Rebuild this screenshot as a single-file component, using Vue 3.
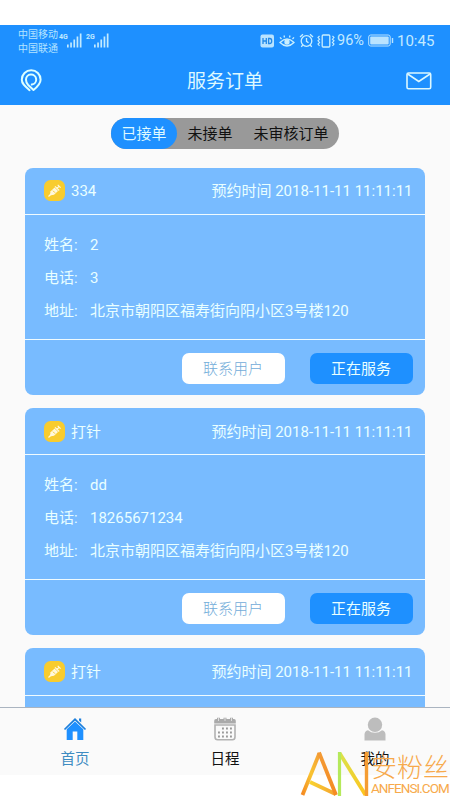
<script setup>
const tabs = ['已接单', '未接单', '未审核订单']
const address = '北京市朝阳区福寿街向阳小区3号楼120'
const orders = [
  { type: '334', rows: [['姓名:', '2'], ['电话:', '3'], ['地址:', address]] },
  { type: '打针', rows: [['姓名:', 'dd'], ['电话:', '18265671234'], ['地址:', address]] },
  { type: '打针', rows: null },
]
const time = '2018-11-11 11:11:11'
const bars = [3, 5, 8, 11, 14]
</script>

<template>
  <div class="screen">
    <header>
      <div class="status">
        <div class="carriers"><span>中国移动</span><span>中国联通</span></div>
        <div v-for="net in ['4G', '2G']" :key="net" class="signal" :class="'net-' + net">
          <b>{{ net }}</b>
          <svg width="16" height="15" viewBox="0 0 16 15">
            <rect v-for="(h, i) in bars" :key="h" :x="i * 3.2" :y="14.5 - h" width="1.7" :height="h" fill="#c3eaff" />
          </svg>
        </div>
        <div class="right">
          <svg class="hd" width="15" height="14" viewBox="0 0 15 14"><rect x=".5" y=".5" width="13.5" height="13" rx="2" fill="#b9e3ff" /><path d="M3 4v6M6.3 4v6M3 7h3.3M8.6 4.5v5h1.3q1.8 0 1.8-2.5T9.9 4.5z" fill="none" stroke="#2389e8" stroke-width="1.3" /></svg>
          <svg class="eye" width="16" height="14" viewBox="0 0 16 14" fill="none" stroke="#c9efff" stroke-width="1.3"><path d="M1 8.5Q8 1.5 15 8.5Q8 15.5 1 8.5zM2.5 5L1 3.4M5.5 3.5L5 1.5M10.5 3.5L11 1.5M13.5 5L15 3.4" /><circle cx="8" cy="8" r="2" fill="#c9efff" /></svg>
          <svg class="alarm" width="15" height="15" viewBox="0 0 15 15" fill="none" stroke="#c9efff" stroke-width="1.3"><circle cx="7.5" cy="8" r="5.3" /><path d="M7.5 5v3.3l2 1.5M1 4L4 1.2M14 4L11 1.2M3.7 12L2.3 13.8M11.3 12l1.4 1.8" /></svg>
          <svg class="vibe" width="18" height="14" viewBox="0 0 18 14" fill="none" stroke="#c9efff" stroke-width="1.3"><rect x="5.2" y="1" width="7.6" height="12" rx="1" /><path d="M2.5 2L1 3.6 2.6 5.2 1 6.8 2.6 8.4 1 10 2.5 11.8M15.5 2L17 3.6 15.4 5.2 17 6.8 15.4 8.4 17 10 15.5 11.8" stroke-width="1.1" /></svg>
          <span class="percent">96%</span>
          <svg class="battery" width="26" height="13" viewBox="0 0 26 13"><rect x=".7" y="1" width="21.5" height="11" rx="2" fill="none" stroke="#b9e3ff" /><rect x="2.2" y="2.5" width="18.5" height="8" rx="1" fill="#b9e3ff" /><path d="M24.5 4v5" stroke="#b9e3ff" stroke-width="1.4" /></svg>
          <span class="clock">10:45</span>
        </div>
      </div>
      <div class="titlebar">
        <svg class="pin" width="24" height="24" viewBox="0 0 24 24" fill="none" stroke="#dcffff" stroke-width="2" stroke-linejoin="round" stroke-linecap="round"><path d="M9.6 21.2C5 17.2 1.8 14.7 1.8 10.7A9.4 9.4 0 0 1 20.6 10.7C20.6 14.7 17.5 17.6 13.5 21L8.2 16C6.6 14.4 6 12.8 6 10.7A5.1 5.1 0 1 1 11.8 15.6" /></svg>
        <h1>服务订单</h1>
        <svg class="mail" width="26" height="18" viewBox="0 0 26 18" fill="none" stroke="#dcf8ff" stroke-width="1.6"><rect x="1" y="1" width="23.7" height="15.8" rx="1.5" /><path d="M1.7 2L12.8 9.5 24 2" /></svg>
      </div>
    </header>

    <main>
      <nav class="segments">
        <span v-for="(tab, i) in tabs" :key="tab" :class="{ active: i === 0 }">{{ tab }}</span>
      </nav>
      <article v-for="(order, i) in orders" :key="i" class="card" :class="{ peek: !order.rows }">
        <div class="card-head">
          <svg class="needle" width="21" height="21" viewBox="0 0 21 21"><rect width="21" height="21" rx="6.5" fill="#f8cc2e" /><path d="M4.5 16.5L7 14" stroke="#fff8dc" stroke-width="1.2" /><path d="M5.8 15.4L6.6 11.2 10.6 7.6 14 11 10 14.8z" fill="#fff8dc" /><path d="M12.5 8.9L15 6.3M11 6.3L15.2 10.5M13.7 4.8L16.6 7.7" stroke="#fff8dc" stroke-width="1.2" /><path d="M9 10.7l2 2" stroke="#f8cc2e" /></svg>
          <span>{{ order.type }}</span>
          <span class="time">预约时间 {{ time }}</span>
        </div>
        <template v-if="order.rows">
          <dl>
            <div v-for="[label, value] in order.rows" :key="label"><dt>{{ label }}</dt><dd>{{ value }}</dd></div>
          </dl>
          <div class="actions">
            <button class="contact">联系用户</button>
            <button class="serving">正在服务</button>
          </div>
        </template>
      </article>
    </main>

    <footer>
      <div class="item home">
        <svg width="24" height="24" viewBox="0 0 24 24"><path d="M1.5 12.5L12 2.3 22.5 12.5" fill="none" stroke="#1c7fdc" stroke-width="1.7" /><path d="M16 1.5h2.2v4L16 3.5z" fill="#1c7fdc" /><path d="M3.7 12.3L12 4.5l8.3 7.8V23h-6v-8.5H9.7V23h-6z" fill="#1e90ff" /></svg>
        <span>首页</span>
      </div>
      <div class="item">
        <svg width="24" height="24" viewBox="0 0 24 24"><path d="M1.2 6.5V3.8Q1.2 2 3 2h1V.8h3V2h3.5V.8h3V2H17V.8h3V2h1q1.8 0 1.8 1.8v2.7z" fill="#aaa" /><path d="M5.5 1v3M12 1v3M18.5 1v3" stroke="#ddd" /><path d="M2 8v12q0 2.7 2.7 2.7h14.6q2.7 0 2.7-2.7V8z" fill="none" stroke="#b2b2b2" stroke-width="1.6" /><path d="M9 11.5h11M5 15.5h15M5 19.5h15" stroke="#999" stroke-width="1.8" stroke-dasharray="1.9 2.1" /></svg>
        <span>日程</span>
      </div>
      <div class="item">
        <svg width="24" height="24" viewBox="0 0 24 24" fill="#bdbdbd"><circle cx="12" cy="7.8" r="7.2" /><path d="M1.5 23.5v-6q0-3.5 3.5-4.2 3 2.5 7 2.5t7-2.5q3.500.7 3.500 4.200v6z" /></svg>
        <span>我的</span>
      </div>
    </footer>

    <div class="watermark">
      <svg width="71" height="50" viewBox="0 0 71 50" fill="none" stroke-width="3.8">
        <defs>
          <linearGradient id="leg" x1="0" y1="0" x2="0" y2="1"><stop stop-color="#f39b35" /><stop offset="1" stop-color="#f58a22" /></linearGradient>
          <linearGradient id="rise" x1="0" y1="1" x2="1" y2="0"><stop stop-color="#f58a22" /><stop offset=".5" stop-color="#f9c431" /><stop offset="1" stop-color="#f39b35" /></linearGradient>
          <linearGradient id="diagonal" x1="0" y1="0" x2="1" y2="1"><stop stop-color="#d9e34c" /><stop offset="1" stop-color="#ffc41d" /></linearGradient>
          <linearGradient id="cross" x1="0" y1="0" x2="1" y2="0"><stop stop-color="#f9d430" /><stop offset="1" stop-color="#f4a131" /></linearGradient>
        </defs>
        <path d="M10 32L35.500 44" stroke="url(#cross)" />
        <path d="M2.500 45L19.500 3" stroke="url(#rise)" />
        <path d="M19 2.500L36 45" stroke="url(#leg)" />
        <path d="M39.500 3L65.500 45" stroke="url(#diagonal)" />
        <path d="M39.500 2v44" stroke="#b5e95b" stroke-width="3.200" />
        <path d="M66.500 2v44" stroke="#f59d32" stroke-width="3.400" />
      </svg>
      <div class="brand"><span class="brand-name">安粉丝</span><span class="brand-url">ANFENSI.COM</span></div>
    </div>
  </div>
</template>

<style>
body { margin: 0; background: #fff; overflow: hidden; }
</style>

<style scoped>
* { box-sizing: border-box; }
svg { display: block; flex: none; }
.screen { position: relative; width: 450px; height: 800px; padding: 25px 0; overflow: hidden; display: flex; flex-direction: column; background: #fff; font: 15px/20px Roboto, "Noto Sans CJK SC", sans-serif; }
header { height: 80px; flex: none; background: #1e90ff; color: #dff9ff; }
.status { height: 31px; display: flex; align-items: center; padding: 0 15px 0 18px; }
.carriers { display: flex; flex-direction: column; width: 40px; font-size: 10px; line-height: 14px; color: #b4e3ff; padding-top: 2px; white-space: nowrap; }
.signal { display: flex; color: #c3eaff; }
.signal b { width: 8px; font-size: 7px; line-height: 8px; }
.net-4G { margin-left: 1px; }
.net-2G { margin-left: 3px; }
.right { flex: 1; display: flex; align-items: center; justify-content: flex-end; color: #c3eaff; }
.eye { margin-left: 4px; }
.alarm { margin-left: 4px; }
.vibe { margin-left: 3px; }
.percent { width: 33px; padding-left: 2px; font-size: 14.5px; }
.battery { margin-right: 3px; }
.clock { width: 38px; }
.titlebar { height: 49px; display: flex; align-items: center; justify-content: space-between; padding: 0 18px 0 20px; }
h1 { margin: 0; font-size: 19px; font-weight: 400; line-height: 26px; padding-top: 3px; }
main { height: 602px; flex: none; overflow: hidden; background: #fafafa; padding: 13px 25px 0; display: flex; flex-direction: column; align-items: center; }
.segments { display: flex; height: 31px; flex: none; border-radius: 16px; background: #999; color: #111; line-height: 33px; margin-bottom: 18.5px; width: 228px; }
.segments span { width: 66px; text-align: center; white-space: nowrap; }
.segments span:last-child { width: 96px; }
.segments .active { background: #1e90ff; color: #dff9ff; border-radius: 16px; }
.card { width: 400px; height: 227.5px; margin-bottom: 12.8px; flex: none; display: flex; flex-direction: column; border-radius: 8px; background: #78bbff; color: #e9ffff; overflow: hidden; }
.card.peek { height: 80px; }
.card-head { height: 47.5px; flex: none; display: flex; align-items: center; padding: 0 12.5px 0 19px; gap: 6px; border-bottom: 1.5px solid #f0fbff; }
.card-head span { padding-top: 1px; }
.time { margin-left: auto; }
dl { margin: 0; height: 124px; flex: none; padding: 13.6px 19px 0; }
dl div { display: flex; height: 33px; line-height: 33px; }
dt { width: 46px; }
dd { margin: 0; }
.actions { height: 56px; border-top: 1.5px solid #f0fbff; display: flex; justify-content: flex-end; gap: 25px; padding: 12.5px 12.5px 0; }
button { width: 103px; height: 31px; padding: 1px 0 0; border: 0; border-radius: 7px; font: inherit; }
.contact { background: #fff; color: #72acd9; font-weight: 300; }
.serving { background: #1e90ff; color: #e9ffff; }
footer { height: 68px; flex: none; background: #fafafa; border-top: 1px solid #aab4c0; display: flex; }
.item { flex: 1; display: flex; flex-direction: column; align-items: center; padding-top: 9px; gap: 8.5px; color: #111; font-size: 14.5px; }
.home { color: #3e8cc2; }
.watermark { position: absolute; left: 300px; top: 750px; width: 150px; height: 50px; display: flex; }
.brand { display: flex; flex-direction: column; color: #f7a94b; white-space: nowrap; }
.brand-name { font-size: 26px; line-height: 36px; height: 30px; font-weight: 300; }
.brand-url { font: 13.5px/16px Roboto, sans-serif; letter-spacing: -.95px; }
</style>
